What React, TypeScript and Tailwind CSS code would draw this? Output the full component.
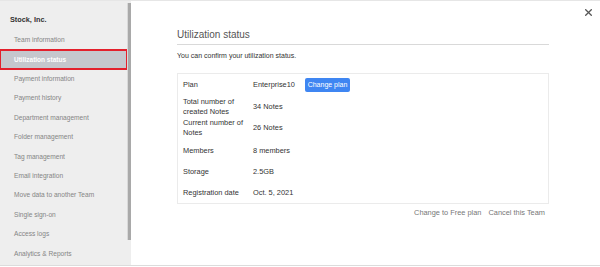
import React from "react";

const items = [
  "Team information",
  "Utilization status",
  "Payment information",
  "Payment history",
  "Department management",
  "Folder management",
  "Tag management",
  "Email integration",
  "Move data to another Team",
  "Single sign-on",
  "Access logs",
  "Analytics & Reports",
];

const rows: { label: React.ReactNode; value: React.ReactNode; h: string }[] = [
  {
    label: "Plan",
    value: (
      <div className="flex items-center">
        <span className="w-[52px]">Enterprise10</span>
        <span className="h-[14.5px] w-[45px] rounded-[2px] bg-[#3f86f2] text-white text-[7px] flex items-center justify-center">
          Change plan
        </span>
      </div>
    ),
    h: "h-[22px]",
  },
  { label: "Total number of created Notes", value: "34 Notes", h: "h-[21px]" },
  { label: "Current number of Notes", value: "26 Notes", h: "h-[22px]" },
  { label: "Members", value: "8 members", h: "h-[23px]" },
  { label: "Storage", value: "2.5GB", h: "h-[20px]" },
  { label: "Registration date", value: "Oct. 5, 2021", h: "h-[21px]" },
];

export default function App() {
  return (
    <div
      className="w-[600px] h-[267px] flex flex-col bg-white overflow-hidden"
      style={{ fontFamily: '"Liberation Sans", Arial, sans-serif' }}
    >
      <div className="flex h-[265px] border-t border-[#e6e6e6]">
        {/* Sidebar */}
        <div className="relative w-[131px] shrink-0 bg-[#eeeeee] pt-[14px]">
          <div className="pl-[10px] h-[10px] leading-[10px] text-[7.3px] font-bold text-[#333]">
            Stock, Inc.
          </div>
          <div className="mt-[5.5px] pr-[4px]">
            {items.map((it) =>
              it === "Utilization status" ? (
                <div
                  key={it}
                  className="h-[19.4px] flex items-center pl-[14px] bg-[#c5c7cd] text-white font-bold text-[6.5px] outline-2 outline-solid outline-[#e3202c] -outline-offset-1"
                >
                  {it}
                </div>
              ) : (
                <div
                  key={it}
                  className="h-[19.4px] flex items-center pl-[14px] text-[#858585] text-[6.6px]"
                >
                  {it}
                </div>
              )
            )}
          </div>
          <div className="absolute left-[127px] top-[2px] w-[4px] h-[237px] border-l border-[#d9d9d9] bg-[#a9a9a9]" />
        </div>

        {/* Main */}
        <div className="relative flex-1 pl-[46px] pr-[51px]">
          <div className="absolute right-[8px] top-[8px] w-[7px] h-[7px]">
            <svg viewBox="0 0 10 10" width="7" height="7">
              <path d="M1 1 L9 9 M9 1 L1 9" stroke="#555" strokeWidth="1.8" strokeLinecap="square" />
            </svg>
          </div>
          <div className="mt-[27px] h-[14px] leading-[14px] text-[10px] text-[#555]">
            Utilization status
          </div>
          <div className="mt-[2px] h-px bg-[#d9d9d9]" />
          <div className="mt-[6px] h-[10px] leading-[10px] text-[7px] text-[#333]">
            You can confirm your utilization status.
          </div>
          <div className="mt-[12px] border border-[#ebebeb] text-[7.4px] text-[#333]">
            {rows.map((r, i) => (
              <div key={i} className={`flex items-center pl-[5px] ${r.h}`}>
                <div className="w-[70px] pr-[6px] leading-[10px]">{r.label}</div>
                <div className="leading-[10px]">{r.value}</div>
              </div>
            ))}
          </div>
          <div className="mt-[4px] flex justify-end gap-[7px] pr-[4px] h-[10px] leading-[10px] text-[7.4px] text-[#777]">
            <span>Change to Free plan</span>
            <span>Cancel this Team</span>
          </div>
        </div>
      </div>
      <div className="h-px bg-[#dcdcdc]" />
      <div className="h-px bg-white" />
    </div>
  );
}
